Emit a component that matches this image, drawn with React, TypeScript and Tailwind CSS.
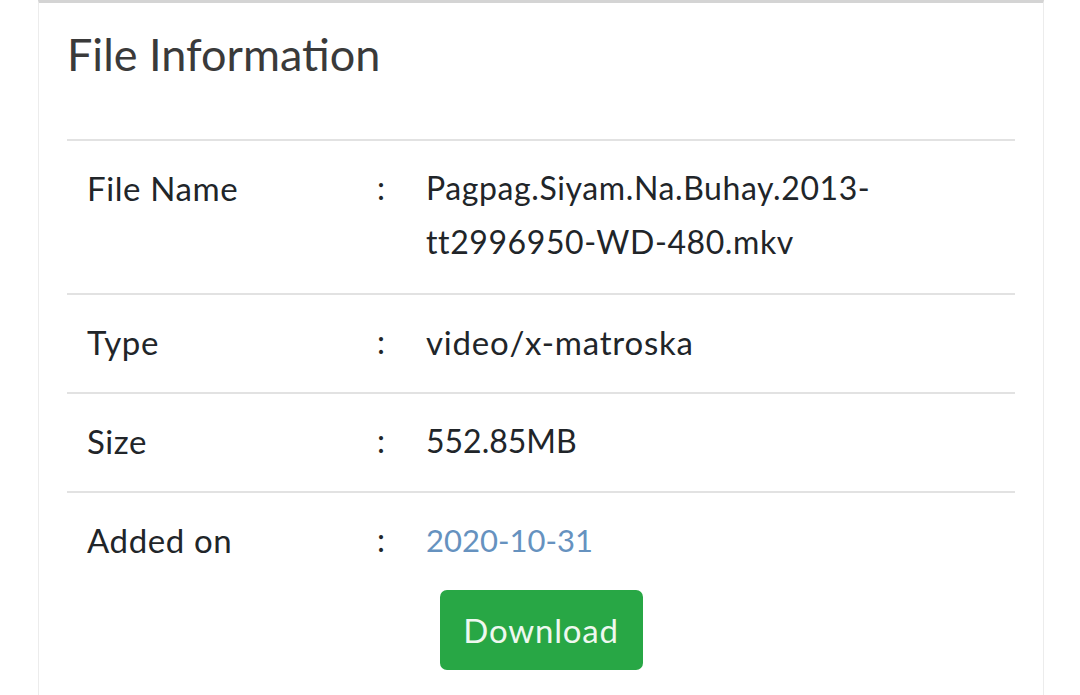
import React from 'react';

const rows = [
  { label: 'File Name', value: 'Pagpag.Siyam.Na.Buhay.2013-tt2996950-WD-480.mkv', cls: 'text-[32px] tracking-[0.6px]' },
  { label: 'Type', value: 'video/x-matroska', cls: 'text-[33px] tracking-[0.8px]' },
  { label: 'Size', value: '552.85MB', cls: 'text-[32px]' },
];

const App: React.FC = () => {
  return (
    <div className="w-[1080px] h-[695px] bg-white overflow-hidden font-['Lato',sans-serif] text-[#212529]">
      <div className="ml-[38px] w-[1006px] h-full border-t-[3px] border-t-[#d4d4d4] border-x border-x-[#ececec] px-[28px] pt-[24px]">
        <h1 className="text-[45px] leading-[55px] text-[#3a3a3a] mb-[57px]">File Information</h1>

        <div className="border-t-2 border-[#e2e2e2]">
          {rows.map(row => (
            <div
              key={row.label}
              className="grid grid-cols-[289px_50px_1fr] border-b-2 border-[#e2e2e2] leading-[54px] pt-[20px] pb-[23px] first:pb-[24px]"
            >
              <div className="pl-[20px] text-[33px] tracking-[0.6px]">{row.label}</div>
              <div className="pl-[21px] text-[32px]">:</div>
              <div className={`pl-[20px] pr-[22px] break-words ${row.cls}`}>{row.value}</div>
            </div>
          ))}

          <div className="grid grid-cols-[289px_50px_1fr] leading-[54px] pt-[20px]">
            <div className="pl-[20px] text-[33px] tracking-[0.6px]">Added on</div>
            <div className="pl-[21px] text-[32px]">:</div>
            <div className="pl-[20px] text-[31px] text-[#6692bf]">2020-10-31</div>
          </div>

          <div className="flex justify-center pt-[23px]">
            <button className="w-[203px] h-[80px] rounded-[7px] bg-[#28a745] text-[#eef8ef] text-[33px] tracking-[0.8px] leading-none">
              Download
            </button>
          </div>
        </div>
      </div>
    </div>
  );
};

export default App;
